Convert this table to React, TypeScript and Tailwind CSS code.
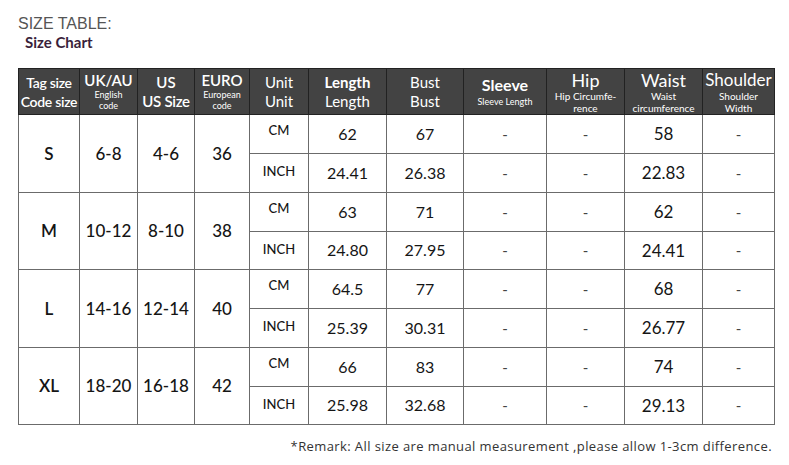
import React from "react";

const cols = [61, 58, 57, 55, 59, 78, 77, 83, 78, 78, 72];

const groups = [
  { tag: "S", uk: "6-8", us: "4-6", euro: "36", cm: ["62", "67", "58"], inch: ["24.41", "26.38", "22.83"] },
  { tag: "M", uk: "10-12", us: "8-10", euro: "38", cm: ["63", "71", "62"], inch: ["24.80", "27.95", "24.41"] },
  { tag: "L", uk: "14-16", us: "12-14", euro: "40", cm: ["64.5", "77", "68"], inch: ["25.39", "30.31", "26.77"] },
  { tag: "XL", uk: "18-20", us: "16-18", euro: "42", cm: ["66", "83", "74"], inch: ["25.98", "32.68", "29.13"] },
];

const th = "border border-[#222] bg-[#434343] text-white text-center align-middle p-0 font-normal leading-none whitespace-nowrap overflow-hidden";
const td = "border border-[#6b6b6b] text-center align-middle p-0 text-[#151515]";

const Dash = () => <span className="text-[#444] text-[15px]">-</span>;

const App = () => {
  return (
    <div className="w-[789px] h-[465px] bg-white relative overflow-hidden" style={{ fontFamily: "Lato, 'Open Sans', sans-serif" }}>
      <div className="pl-[18px] pt-[15px]">
        <div className="text-[16px] leading-[18px] text-[#555]" style={{ fontFamily: "'Liberation Sans', sans-serif", fontWeight: 300 }}>
          SIZE TABLE:
        </div>
        <div className="pl-[7px] text-[15px] leading-[19px] font-bold text-[#3a1f3b]">Size Chart</div>
      </div>

      <table className="table-fixed border-collapse ml-[18px] mt-[16px]" style={{ width: 756 }}>
        <colgroup>
          {cols.map((w, i) => (
            <col key={i} style={{ width: w }} />
          ))}
        </colgroup>
        <thead>
          <tr className="h-[46px]">
            <th className={th}>
              <div className="text-[14px] font-semibold leading-[19px] tracking-[-0.3px]">Tag size</div>
              <div className="text-[14px] font-semibold leading-[19px] tracking-[-0.3px]">Code size</div>
            </th>
            <th className={th}>
              <div className="text-[15px] font-semibold leading-[17px]">UK/AU</div>
              <div className="text-[9px] leading-[11px]">English</div>
              <div className="text-[9px] leading-[11px]">code</div>
            </th>
            <th className={th}>
              <div className="text-[15px] font-semibold leading-[19px]">US</div>
              <div className="text-[15px] font-semibold leading-[19px] tracking-[-0.3px]">US Size</div>
            </th>
            <th className={th}>
              <div className="text-[15px] font-semibold leading-[17px]">EURO</div>
              <div className="text-[9px] leading-[11px]">European</div>
              <div className="text-[9px] leading-[11px]">code</div>
            </th>
            <th className={th}>
              <div className="text-[15px] leading-[19px]">Unit</div>
              <div className="text-[15px] leading-[19px]">Unit</div>
            </th>
            <th className={th}>
              <div className="text-[15px] font-bold leading-[19px]">Length</div>
              <div className="text-[15px] leading-[19px]">Length</div>
            </th>
            <th className={th}>
              <div className="text-[15px] leading-[19px]">Bust</div>
              <div className="text-[15px] leading-[19px]">Bust</div>
            </th>
            <th className={th}>
              <div className="text-[16px] font-bold leading-[20px]">Sleeve</div>
              <div className="text-[9px] leading-[14px]">Sleeve Length</div>
            </th>
            <th className={th}>
              <div className="text-[18px] leading-[20px]">Hip</div>
              <div className="text-[10px] leading-[12px]">Hip Circumfe-</div>
              <div className="text-[10px] leading-[12px]">rence</div>
            </th>
            <th className={th}>
              <div className="text-[18px] leading-[20px]">Waist</div>
              <div className="text-[10px] leading-[12px]">Waist</div>
              <div className="text-[10px] leading-[12px]">circumference</div>
            </th>
            <th className={th}>
              <div className="text-[17px] leading-[20px]">Shoulder</div>
              <div className="text-[10px] leading-[12px]">Shoulder</div>
              <div className="text-[10px] leading-[12px]">Width</div>
            </th>
          </tr>
        </thead>
        <tbody>
          {groups.map((g) => (
            <React.Fragment key={g.tag}>
              <tr className="h-[39px]">
                <td rowSpan={2} className={`${td} text-[17px] font-semibold`}>{g.tag}</td>
                <td rowSpan={2} className={`${td} text-[17px] font-medium`}>{g.uk}</td>
                <td rowSpan={2} className={`${td} text-[17px] font-medium`}>{g.us}</td>
                <td rowSpan={2} className={`${td} text-[17px] font-medium`}>{g.euro}</td>
                <td className={`${td} text-[13px] font-medium pb-[6px]`}>CM</td>
                <td className={`${td} text-[16px]`}>{g.cm[0]}</td>
                <td className={`${td} text-[16px]`}>{g.cm[1]}</td>
                <td className={td}><Dash /></td>
                <td className={td}><Dash /></td>
                <td className={`${td} text-[17px]`}>{g.cm[2]}</td>
                <td className={td}><Dash /></td>
              </tr>
              <tr className="h-[38.5px]">
                <td className={`${td} text-[13px] font-medium pb-[2px]`}>INCH</td>
                <td className={`${td} text-[16px]`}>{g.inch[0]}</td>
                <td className={`${td} text-[16px]`}>{g.inch[1]}</td>
                <td className={td}><Dash /></td>
                <td className={td}><Dash /></td>
                <td className={`${td} text-[17px]`}>{g.inch[2]}</td>
                <td className={td}><Dash /></td>
              </tr>
            </React.Fragment>
          ))}
        </tbody>
      </table>

      <div
        className="text-right pr-[17px] mt-[12px] text-[13px] text-[#333] tracking-[0.4px]"
        style={{ fontFamily: "'Open Sans', sans-serif" }}
      >
        *Remark: All size are manual measurement ,please allow 1-3cm difference.
      </div>
    </div>
  );
};

export default App;
